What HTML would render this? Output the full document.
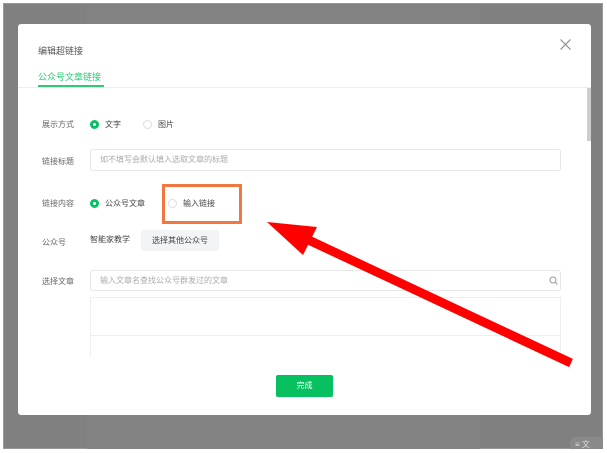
<!DOCTYPE html>
<html><head><meta charset="utf-8"><style>
*{margin:0;padding:0;box-sizing:border-box}
body{width:607px;height:453px;background:#fff;position:relative;overflow:hidden;font-family:"Liberation Sans","Noto Sans CJK SC",sans-serif}
.bg{position:absolute;left:3px;top:3px;width:600px;height:446px;background:#808080;border:1px solid #999}
.inner{position:absolute;left:87px;top:6px;width:393px;height:443px;background:#838383}
.modal{position:absolute;left:18px;top:24px;width:573px;height:391px;background:#fff;border-radius:3px}
.t{position:absolute;font-size:9px;color:#444;white-space:nowrap}
.lbl{position:absolute;left:24px;font-size:8px;color:#666}
.radio{position:absolute;width:9px;height:9px;border-radius:50%;border:1px solid #ddd}
.on{border:3px solid #07c160}
.inp{position:absolute;left:72px;width:471px;border:1px solid #e7e7e7;border-radius:3px;font-size:8px;color:#aaa;padding-left:9px}
</style></head><body>
<div class="bg"></div><div class="inner"></div>
<div class="modal">
<div class="t" style="left:20px;top:20px;font-size:9px;color:#555">编辑超链接</div>
<svg style="position:absolute;left:542px;top:15px" width="11" height="11"><path d="M0.5 0.5L10.5 10.5M10.5 0.5L0.5 10.5" stroke="#888" stroke-width="1.1"/></svg>
<div class="t" style="left:20px;top:46px;color:#2ccb74;font-size:9px">公众号文章链接</div>
<div style="position:absolute;left:20px;top:61px;width:66px;height:2px;background:#2ccb74"></div>
<div style="position:absolute;left:0;top:63px;width:573px;height:1px;background:#eee"></div>
<div style="position:absolute;left:569px;top:64px;width:4px;height:53px;background:#ccc"></div>
<div class="lbl" style="top:95px">展示方式</div>
<div class="radio on" style="left:72px;top:96px"></div><div class="t" style="left:87px;top:95px;font-size:8px">文字</div>
<div class="radio" style="left:125px;top:96px"></div><div class="t" style="left:140px;top:95px;font-size:8px">图片</div>
<div class="lbl" style="top:132px">链接标题</div>
<div class="inp" style="top:125px;height:22px;line-height:20px">如不填写会默认填入选取文章的标题</div>
<div class="lbl" style="top:174px">链接内容</div>
<div class="radio on" style="left:72px;top:175px"></div><div class="t" style="left:87px;top:174px;font-size:8px">公众号文章</div>
<div class="radio" style="left:150px;top:175px"></div><div class="t" style="left:165px;top:174px;font-size:8px">输入链接</div>
<div class="lbl" style="top:213px">公众号</div>
<div class="t" style="left:72px;top:210px;font-size:8px">智能家教学</div>
<div style="position:absolute;left:123px;top:206px;width:78px;height:21px;background:#f3f4f6;border-radius:3px;font-size:8px;color:#444;text-align:center;line-height:21px">选择其他公众号</div>
<div class="lbl" style="top:252px">选择文章</div>
<div class="inp" style="top:246px;height:21px;line-height:19px">输入文章名查找公众号群发过的文章</div>
<svg style="position:absolute;left:531px;top:252px" width="9" height="9"><circle cx="4" cy="4" r="3" fill="none" stroke="#999"/><path d="M6.2 6.2L8.5 8.5" stroke="#999"/></svg>
<div style="position:absolute;left:72px;top:273px;width:471px;height:60px;border:1px solid #eee;border-bottom:none"></div>
<div style="position:absolute;left:72px;top:311px;width:471px;height:1px;background:#eee"></div>
<div style="position:absolute;left:258px;top:351px;width:57px;height:22px;background:#07c160;border-radius:2px;color:#fff;font-size:8px;text-align:center;line-height:22px">完成</div>
</div>
<div style="position:absolute;left:162px;top:184px;width:80px;height:40px;border:3px solid #f07840"></div>
<svg style="position:absolute;left:0;top:0" width="607" height="453">
<line x1="571" y1="363" x2="300" y2="236" stroke="#f00" stroke-width="9"/>
<polygon points="267,222 317,227 303,255" fill="#f00"/>
</svg>
<div style="position:absolute;left:570px;top:437px;width:33px;height:12px;background:#8a8a8a;border-radius:6px 0 0 0"></div>
<div class="t" style="left:575px;top:439px;font-size:8px;color:#ddd">≡ 文</div>
</body></html>
